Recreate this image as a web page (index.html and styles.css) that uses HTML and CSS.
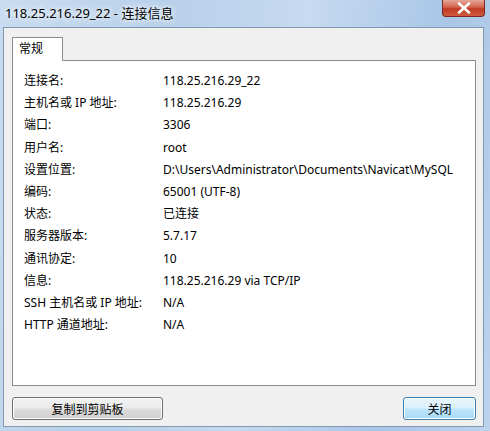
FILE: index.html
```html
<!DOCTYPE html>
<html lang="zh">
<head>
<meta charset="utf-8">
<link rel="stylesheet" href="styles.css">
</head>
<body>
<div class="window">
  <div class="titlebar">
    <span class="title">118.25.216.29_22 - 连接信息</span>
    <div class="close-btn">
      <svg width="16" height="12" viewBox="0 0 16 12"><path d="M3 1.5 L13 10.5 M13 1.5 L3 10.5" stroke="#ffffff" stroke-width="2.6" stroke-linecap="round"/></svg>
    </div>
  </div>
  <div class="client">
    <div class="tabs">
      <div class="tab">常规</div>
    </div>
    <div class="panel">
      <div class="row"><span class="label">连接名:</span><span class="value">118.25.216.29_22</span></div>
      <div class="row"><span class="label">主机名或 IP 地址:</span><span class="value">118.25.216.29</span></div>
      <div class="row"><span class="label">端口:</span><span class="value">3306</span></div>
      <div class="row"><span class="label">用户名:</span><span class="value">root</span></div>
      <div class="row"><span class="label">设置位置:</span><span class="value">D:\Users\Administrator\Documents\Navicat\MySQL</span></div>
      <div class="row"><span class="label">编码:</span><span class="value">65001 (UTF-8)</span></div>
      <div class="row"><span class="label">状态:</span><span class="value">已连接</span></div>
      <div class="row"><span class="label">服务器版本:</span><span class="value">5.7.17</span></div>
      <div class="row"><span class="label">通讯协定:</span><span class="value">10</span></div>
      <div class="row"><span class="label">信息:</span><span class="value">118.25.216.29 via TCP/IP</span></div>
      <div class="row"><span class="label">SSH 主机名或 IP 地址:</span><span class="value">N/A</span></div>
      <div class="row"><span class="label">HTTP 通道地址:</span><span class="value">N/A</span></div>
    </div>
    <div class="buttons">
      <button class="btn btn-copy">复制到剪贴板</button>
      <button class="btn btn-close">关闭</button>
    </div>
  </div>
</div>
</body>
</html>
```
FILE: styles.css
```css
html, body {
  margin: 0;
  padding: 0;
}
body {
  width: 490px;
  height: 431px;
  overflow: hidden;
  font-family: "Noto Sans", "Noto Sans CJK SC", sans-serif;
  font-size: 12px;
  color: #000;
}
.window {
  width: 490px;
  height: 431px;
  box-sizing: border-box;
  display: flex;
  flex-direction: column;
  background: linear-gradient(100deg, #c9dcf1 0%, #b8d0ea 30%, #c6daf0 55%, #a9c6e6 80%, #bcd3ec 100%);
  padding: 0 6px 4px 3px;
}
.titlebar {
  height: 27px;
  display: flex;
  align-items: flex-start;
  justify-content: space-between;
  flex-shrink: 0;
}
.title {
  font-size: 13px;
  line-height: 27px;
  padding-left: 2px;
  color: #000;
  text-shadow: 0 0 8px #ffffff, 0 0 4px #ffffff;
}
.close-btn {
  width: 43px;
  height: 17px;
  margin-right: -1px;
  box-sizing: border-box;
  border: 1px solid #7a2a22;
  border-top: none;
  border-radius: 0 0 4px 4px;
  background: linear-gradient(#e7a89a 0%, #d4604c 45%, #c13a26 55%, #cf5a3c 100%);
  display: flex;
  align-items: center;
  justify-content: center;
}
.client {
  flex: 1;
  background: #f0f0f0;
  border: 1px solid #8198b2;
  display: flex;
  flex-direction: column;
  padding: 9px 7px 5px 8px;
}
.tabs {
  display: flex;
  height: 23px;
  position: relative;
  z-index: 1;
}
.tab {
  width: 51px;
  box-sizing: border-box;
  border: 1px solid #898c95;
  border-bottom: none;
  background: #ffffff;
  padding-left: 6px;
  line-height: 21px;
  height: 24px;
}
.panel {
  height: 326px;
  box-sizing: border-box;
  background: #ffffff;
  border: 1px solid #898c95;
  padding: 9px 8px 0 11px;
}
.row {
  display: flex;
  height: 22.2px;
  line-height: 22px;
  white-space: nowrap;
}
.label {
  width: 139px;
  flex-shrink: 0;
}
.value {
  width: 292px;
  overflow: hidden;
}
.buttons {
  margin-top: 11px;
  display: flex;
  justify-content: space-between;
}
.btn {
  height: 23px;
  box-sizing: border-box;
  border: 1px solid #707070;
  border-radius: 3px;
  background: linear-gradient(#f2f2f2 0%, #ebebeb 48%, #dddddd 52%, #cfcfcf 100%);
  font-family: "Noto Sans CJK SC", sans-serif;
  font-size: 12px;
  color: #000;
  padding: 0;
  box-shadow: inset 0 0 0 1px #fcfcfc;
}
.btn-copy {
  width: 151px;
}
.btn-close {
  width: 73px;
  border-color: #3c7fb1;
  background: linear-gradient(#eaf6fd 0%, #d9f0fc 48%, #bee6fd 52%, #a7d9f5 100%);
  box-shadow: inset 0 0 0 1px #ffffff;
}
```
